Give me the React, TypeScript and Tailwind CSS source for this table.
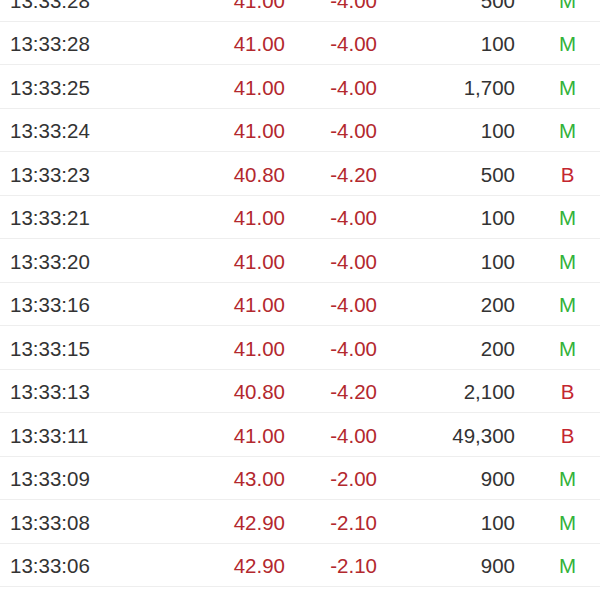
import React from "react";

type Row = { t: string; p: string; c: string; v: string; f: "M" | "B" };

const rows: Row[] = [
  { t: "13:33:28", p: "41.00", c: "-4.00", v: "500", f: "M" },
  { t: "13:33:28", p: "41.00", c: "-4.00", v: "100", f: "M" },
  { t: "13:33:25", p: "41.00", c: "-4.00", v: "1,700", f: "M" },
  { t: "13:33:24", p: "41.00", c: "-4.00", v: "100", f: "M" },
  { t: "13:33:23", p: "40.80", c: "-4.20", v: "500", f: "B" },
  { t: "13:33:21", p: "41.00", c: "-4.00", v: "100", f: "M" },
  { t: "13:33:20", p: "41.00", c: "-4.00", v: "100", f: "M" },
  { t: "13:33:16", p: "41.00", c: "-4.00", v: "200", f: "M" },
  { t: "13:33:15", p: "41.00", c: "-4.00", v: "200", f: "M" },
  { t: "13:33:13", p: "40.80", c: "-4.20", v: "2,100", f: "B" },
  { t: "13:33:11", p: "41.00", c: "-4.00", v: "49,300", f: "B" },
  { t: "13:33:09", p: "43.00", c: "-2.00", v: "900", f: "M" },
  { t: "13:33:08", p: "42.90", c: "-2.10", v: "100", f: "M" },
  { t: "13:33:06", p: "42.90", c: "-2.10", v: "900", f: "M" },
  { t: "13:33:05", p: "42.90", c: "-2.10", v: "300", f: "M" },
];

export default function App() {
  return (
    <div
      className="h-[600px] w-[600px] overflow-hidden bg-white"
      style={{ fontFamily: '"Liberation Sans", Arial, sans-serif' }}
    >
      <div className="mt-[-22px]">
        {rows.map((r, i) => (
          <div
            key={i}
            className="grid h-[43.5px] grid-cols-[190px_85px_92px_138px_85px] items-center border-b border-[#eeeeee] pl-[10px] pt-[3px] text-[20.5px] leading-none"
          >
            <div className="text-[#333333]">{r.t}</div>
            <div className="text-right text-[#b3282e]">{r.p}</div>
            <div className="text-right text-[#b3282e]">{r.c}</div>
            <div className="text-right text-[#333333]">{r.v}</div>
            <div
              className={
                "pl-[20px] text-center " +
                (r.f === "M" ? "text-[#33b23a]" : "text-[#c4262f]")
              }
            >
              {r.f}
            </div>
          </div>
        ))}
      </div>
    </div>
  );
}
